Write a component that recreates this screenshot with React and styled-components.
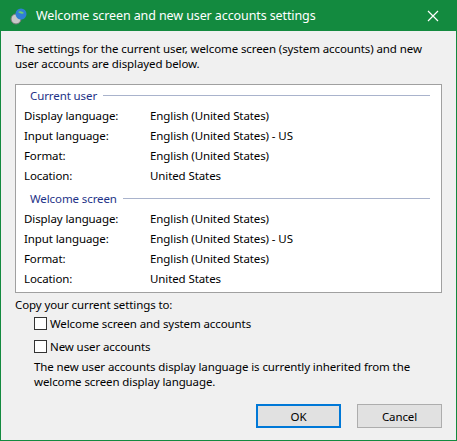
import React from "react";
import styled, { createGlobalStyle } from "styled-components";

const G = createGlobalStyle`
  html,body{margin:0;padding:0;background:#fff;}
  body{font-family:"Noto Sans","Open Sans",sans-serif;font-size:11.5px;letter-spacing:-0.1px;color:#000;}
`;
const Win = styled.div`
  width:457px;height:441px;box-sizing:border-box;border:1px solid #138a3f;border-top:none;
  background:#f0f0f0;display:flex;flex-direction:column;
`;
const Title = styled.div`
  height:31px;background:#138a3f;color:#fff;display:flex;align-items:center;
  padding:0 0 0 9px;font-size:12.5px;gap:8px;
`;
const TitleText = styled.span`flex:1;`;
const Close = styled.div`width:46px;display:flex;justify-content:center;align-items:center;height:31px;`;
const Body = styled.div`padding:10px 14px 0 14px;display:flex;flex-direction:column;`;
const Para = styled.div`line-height:15px;margin-left:${p=>p.$indent||0}px;margin-top:${p=>p.$top||0}px;`;
const Panel = styled.div`
  margin-top:13px;height:207px;background:#fff;border:1px solid #a0a0a0;overflow:hidden;
  padding:0 11px 0 8px;
`;
const Group = styled.div`
  display:flex;align-items:center;gap:6px;color:#1e3287;height:19px;margin:0 0 0 6px;
  &::after{content:"";flex:1;height:1px;background:#a9b3cc;}
`;
const Row = styled.div`display:grid;grid-template-columns:126px 1fr;height:20px;align-items:center;`;
const Section = styled.div`padding-top:${p=>p.$top}px;`;
const Check = styled.label`display:flex;align-items:center;gap:3px;margin-left:19px;height:23px;`;
const Box = styled.span`width:11px;height:11px;border:1px solid #333;background:#fff;display:inline-block;`;
const Buttons = styled.div`display:flex;justify-content:flex-end;gap:16px;margin-top:15px;`;
const Btn = styled.div`
  width:${p=>p.$primary?81:83}px;height:${p=>p.$primary?20:22}px;display:flex;align-items:center;justify-content:center;
  background:#e1e1e1;border:${p=>p.$primary?"2px solid #0078d7":"1px solid #adadad"};
`;

const rows=[["Display language:","English (United States)"],["Input language:","English (United States) - US"],["Format:","English (United States)"],["Location:","United States"]];

export default function App(){
  return <><G/><Win>
    <Title>
      <svg width="18" height="18" viewBox="0 0 18 18">
        <circle cx="6" cy="12" r="5" fill="#c8c8c8" stroke="#777"/>
        <circle cx="11" cy="7" r="5.5" fill="#2f7fd6"/>
        <path d="M8 5 q3 -2 6 1 q-2 2 -6 -1z" fill="#6fd06f"/>
      </svg>
      <TitleText>Welcome screen and new user accounts settings</TitleText>
      <Close><svg width="12" height="12" viewBox="0 0 12 12"><path d="M1 1L11 11M11 1L1 11" stroke="#fff" strokeWidth="1.2"/></svg></Close>
    </Title>
    <Body>
      <Para>The settings for the current user, welcome screen (system accounts) and new user accounts are displayed below.</Para>
      <Panel>
        <Section $top={1}>
          <Group>Current user</Group>
          {rows.map(r=><Row key={r[0]}><span>{r[0]}</span><span>{r[1]}</span></Row>)}
        </Section>
        <Section $top={4}>
          <Group>Welcome screen</Group>
          {rows.map(r=><Row key={r[0]}><span>{r[0]}</span><span>{r[1]}</span></Row>)}
        </Section>
      </Panel>
      <Para $top={4}>Copy your current settings to:</Para>
      <Check><Box/>Welcome screen and system accounts</Check>
      <Check><Box/>New user accounts</Check>
      <Para $indent={19} $top={1}>The new user accounts display language is currently inherited from the welcome screen display language.</Para>
      <Buttons><Btn $primary>OK</Btn><Btn>Cancel</Btn></Buttons>
    </Body>
  </Win></>;
}
